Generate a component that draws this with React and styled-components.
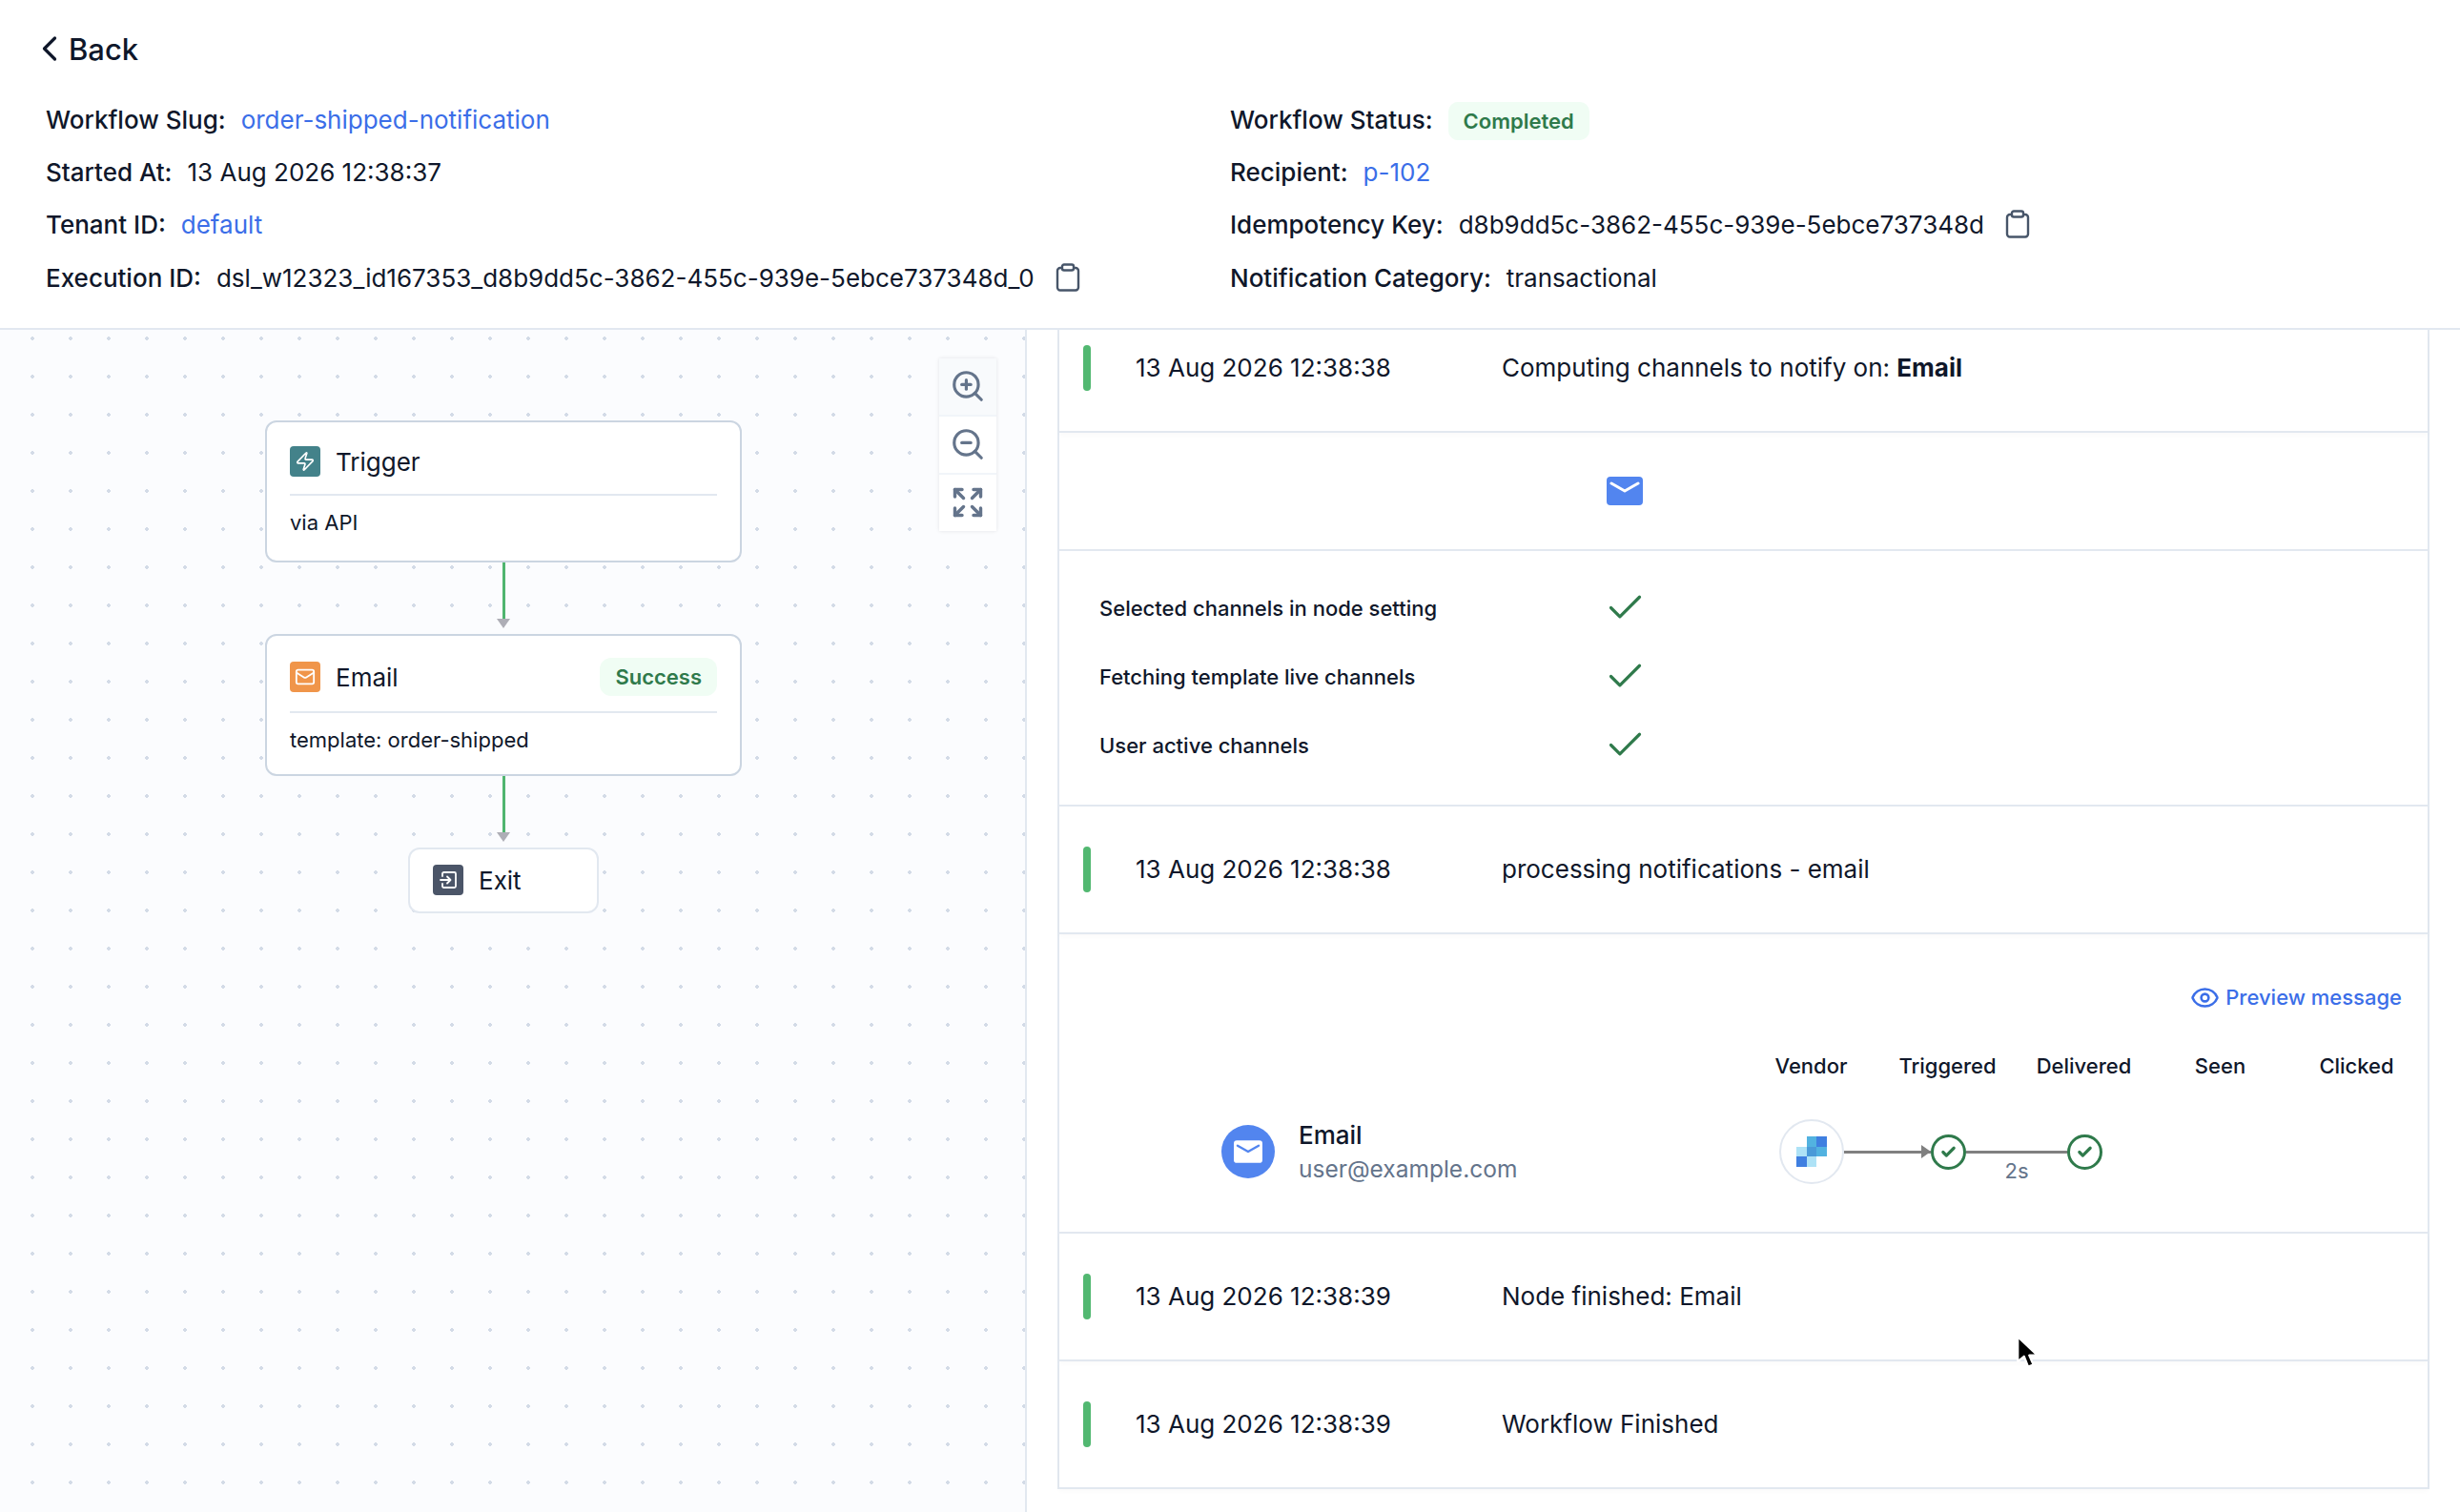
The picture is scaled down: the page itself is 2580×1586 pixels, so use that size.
import React from "react";
import styled, { createGlobalStyle } from "styled-components";
import { ChevronLeft, Zap, Mail, ZoomIn, ZoomOut, Expand, Eye, Check } from "lucide-react";

const GlobalStyle = createGlobalStyle`
	html, body {
		margin: 0;
		padding: 0;
		background: #fff;
		color: #0f172a;
		font-family: Inter, "Liberation Sans", sans-serif;
	}
	* { box-sizing: border-box; }
`;

const Page = styled.div`
	position: relative;
	width: 2580px;
	height: 1586px;
	overflow: hidden;
	background: #fff;
`;

const Header = styled.header`
	height: 346px;
	padding: 26px 48px 0;
	border-bottom: 2px solid #e2e8f0;
`;

const BackLink = styled.a`
	display: flex;
	align-items: center;
	height: 50px;
	margin-left: -18px;
	font-size: 31px;
	font-weight: 500;
	color: #0f172a;
	svg {
		margin-right: -2px;
	}
`;

const MetaGrid = styled.div`
	display: grid;
	grid-template-columns: 1242px 1fr;
	grid-template-rows: 54px 56px 54px 58px;
	margin-top: 22px;
`;

const MetaRow = styled.div`
	display: flex;
	align-items: center;
	gap: 16px;
	font-size: 26px;
`;

const Label = styled.span`
	font-weight: 500;
`;

const Link = styled.a`
	color: #3b6ee8;
`;

const StatusBadge = styled.span`
	display: inline-flex;
	align-items: center;
	height: 40px;
	margin-top: 4px;
	padding: 0 16px;
	border-radius: 10px;
	background: #f0fdf4;
	color: #2f7a4b;
	font-size: 22px;
	font-weight: 600;
`;

const CopyIcon = styled.svg`
	width: 26px;
	height: 30px;
	margin-left: 6px;
	color: #475569;
`;

const Body = styled.main`
	display: flex;
	height: 1240px;
`;

const Canvas = styled.section`
	position: relative;
	flex: 0 0 1077px;
	padding: 95px 0 0 278px;
	border-right: 2px solid #e2e8f0;
	background-color: #fbfcfe;
	background-image: radial-gradient(circle at 2px 2px, #d3dbe7 1.6px, transparent 1.8px);
	background-size: 40px 40px;
	background-position: 32px 7px;
`;

const Flow = styled.div`
	display: flex;
	flex-direction: column;
	align-items: center;
	width: 500px;
`;

const Node = styled.div`
	width: 100%;
	height: 149px;
	padding: 23px 24px 0;
	border: 2px solid #cbd5e1;
	border-radius: 12px;
	background: #fff;
`;

const ExitNode = styled.div`
	display: flex;
	align-items: center;
	gap: 16px;
	width: 200px;
	height: 69px;
	padding: 0 24px 1px;
	border: 2px solid #e2e8f0;
	border-radius: 12px;
	background: #fff;
	font-size: 26px;
`;

const NodeHead = styled.div`
	display: flex;
	align-items: center;
	gap: 16px;
	min-height: 36px;
	padding-bottom: 16px;
	border-bottom: 2px solid #e2e8f0;
	font-size: 26px;
	box-sizing: content-box;
`;

const NodeIcon = styled.span`
	display: flex;
	align-items: center;
	justify-content: center;
	width: 32px;
	height: 32px;
	border-radius: 4px;
	background: ${(p) => p.$bg};
	color: #fff;
`;

const NodeBody = styled.div`
	padding-top: 14px;
	line-height: 28px;
	font-size: 22px;
`;

const SuccessBadge = styled(StatusBadge)`
	margin: 0 0 0 auto;
	border-radius: 12px;
`;

const Connector = styled.div`
	display: flex;
	flex-direction: column;
	align-items: center;
	height: 75px;
	i {
		width: 3px;
		height: 59px;
		background: #4fb56f;
	}
	b {
		width: 0;
		height: 0;
		border-left: 7px solid transparent;
		border-right: 7px solid transparent;
		border-top: 10px solid #aeaeb6;
	}
`;

const ZoomBar = styled.div`
	position: absolute;
	top: 30px;
	right: 30px;
	display: flex;
	flex-direction: column;
	gap: 2px;
	width: 60px;
	background: #f1f5f9;
	box-shadow: 0 0 4px rgba(15, 23, 42, 0.1);
`;

const ZoomButton = styled.button`
	display: flex;
	align-items: center;
	justify-content: center;
	width: 60px;
	height: 59px;
	padding: 0 0 2px;
	border: 0;
	background: ${(p) => (p.$active ? "#f8fafc" : "#fff")};
	color: #64748b;
`;

const LogPane = styled.section`
	flex: 0 0 1439px;
	align-self: flex-start;
	margin-left: 32px;
	border-left: 2px solid #e2e8f0;
	border-right: 2px solid #e2e8f0;
`;

const LogRow = styled.div`
	display: flex;
	align-items: center;
	height: ${(p) => (p.$first ? "108px" : "134px")};
	padding: ${(p) => (p.$first ? "0 0 26px 25px" : "0 0 0 25px")};
	border-bottom: 2px solid #e2e8f0;
	box-shadow: 0 3px 5px rgba(15, 23, 42, 0.02);
	font-size: 26px;
`;

const StatusBar = styled.span`
	flex: none;
	width: 8px;
	height: 48px;
	border-radius: 4px;
	background: #52b871;
`;

const LogTime = styled.span`
	flex: none;
	width: 384px;
	margin: 0 0 2px 47px;
`;

const LogText = styled.span`
	margin-bottom: 2px;
`;

const ChannelIconRow = styled.div`
	display: flex;
	align-items: center;
	height: 124px;
	padding-left: 574px;
	border-bottom: 2px solid #e2e8f0;
`;

const ChannelList = styled.div`
	display: flex;
	flex-direction: column;
	justify-content: center;
	height: 268px;
	padding: 0 0 3px 42px;
	border-bottom: 2px solid #e2e8f0;
`;

const ChannelRow = styled.div`
	display: flex;
	align-items: center;
	height: 72px;
	font-size: 22px;
	font-weight: 500;
`;

const ChannelName = styled.span`
	width: 529px;
`;

const Delivery = styled.div`
	height: 314px;
	padding: 51px 0 0 169px;
	border-bottom: 2px solid #e2e8f0;
`;

const PreviewLink = styled.a`
	display: flex;
	align-items: center;
	justify-content: flex-end;
	gap: 6px;
	height: 30px;
	margin-right: 27px;
	color: #3b6ee8;
	font-size: 22px;
	font-weight: 500;
`;

const DeliveryGrid = styled.div`
	display: grid;
	grid-template-columns: 548px repeat(5, 143px);
	grid-template-rows: 46px 134px;
	margin-top: 34px;
	align-items: center;
`;

const ColHead = styled.span`
	text-align: center;
	font-size: 22px;
	font-weight: 500;
`;

const Recipient = styled.div`
	display: flex;
	align-items: center;
	gap: 25px;
	grid-column: 1;
	padding-left: 1px;
`;

const ChannelDot = styled.span`
	display: flex;
	align-items: center;
	justify-content: center;
	width: 56px;
	height: 56px;
	border-radius: 50%;
	background: #5285ef;
`;

const RecipientText = styled.div`
	display: flex;
	flex-direction: column;
	gap: 5px;
	strong {
		font-size: 26px;
		font-weight: 500;
	}
	span {
		color: #64748b;
		font-size: 24.5px;
	}
`;

const Timeline = styled.div`
	grid-column: 2 / span 3;
	display: flex;
	align-items: center;
	padding-left: 38px;
`;

const VendorDot = styled.span`
	display: flex;
	align-items: center;
	justify-content: center;
	flex: none;
	width: 68px;
	height: 68px;
	border: 2px solid #e2e8f0;
	border-radius: 50%;
`;

const Track = styled.span`
	position: relative;
	display: block;
	flex: none;
	width: ${(p) => p.$w}px;
	height: 3px;
	background: #808080;
`;

const TrackArrow = styled.i`
	position: absolute;
	right: 0;
	top: -6px;
	border-top: 7px solid transparent;
	border-bottom: 7px solid transparent;
	border-left: 10px solid #808080;
`;

const TrackLabel = styled.span`
	position: absolute;
	left: 0;
	right: 0;
	top: 8px;
	text-align: center;
	color: #64748b;
	font-size: 22px;
`;

const CheckDot = styled.span`
	display: flex;
	align-items: center;
	justify-content: center;
	flex: none;
	width: 37px;
	height: 37px;
	border: 3px solid #2f7a4b;
	border-radius: 50%;
	color: #2f7a4b;
`;

const Cursor = styled.svg`
	position: absolute;
	left: 2113px;
	top: 1400px;
	width: 26px;
	height: 39px;
`;

const Clipboard = () => (
	<CopyIcon viewBox="0 0 26 30" fill="none" stroke="currentColor" strokeWidth="2.4">
		<rect x="2" y="5" width="22" height="23.5" rx="3" />
		<rect x="7" y="1.5" width="12" height="6" rx="2" fill="#fff" />
	</CopyIcon>
);

const ExitGlyph = () => (
	<svg width="20" height="20" viewBox="0 0 20 20" fill="none" stroke="#fff" strokeWidth="1.8" strokeLinecap="round" strokeLinejoin="round">
		<path d="M4 6V3.500A1.500 1.500 0 0 1 5.500 2h11A1.500 1.500 0 0 1 18 3.500v13a1.500 1.500 0 0 1-1.500 1.500h-11A1.500 1.500 0 0 1 4 16.500V14" />
		<path d="M2 10h10M9 6.500l3.500 3.500L9 13.500" />
	</svg>
);

const EnvelopeFilled = ({ w, h, bg, stroke }) => (
	<svg width={w} height={h} viewBox="0 0 38 30">
		<rect width="38" height="30" rx="4" fill={bg} />
		<path d="M5 7l14 8 14-8" fill="none" stroke={stroke} strokeWidth="3" strokeLinecap="round" strokeLinejoin="round" />
	</svg>
);

const SendgridLogo = () => (
	<svg width="32" height="32" viewBox="0 0 3 3" shapeRendering="crispEdges">
		<rect x="1" y="0" width="1" height="1" fill="#52b2e0" />
		<rect x="2" y="0" width="1" height="1" fill="#3f7fe0" />
		<rect x="0" y="1" width="1" height="1" fill="#aee2f6" />
		<rect x="1" y="1" width="1" height="1" fill="#4a9ad8" />
		<rect x="2" y="1" width="1" height="1" fill="#52b2e0" />
		<rect x="0" y="2" width="1" height="1" fill="#3f7fe0" />
		<rect x="1" y="2" width="1" height="1" fill="#aee2f6" />
	</svg>
);

const Arrow = () => (
	<Connector>
		<i />
		<b />
	</Connector>
);

const channels = [
	"Selected channels in node setting",
	"Fetching template live channels",
	"User active channels",
];

const Entry = ({ time, first, children }) => (
	<LogRow $first={first}>
		<StatusBar />
		<LogTime>{time}</LogTime>
		<LogText>{children}</LogText>
	</LogRow>
);

export default function App() {
	return (
		<Page>
			<GlobalStyle />
			<Header>
				<BackLink>
					<ChevronLeft size={44} strokeWidth={1.8} />
					Back
				</BackLink>
				<MetaGrid>
					<MetaRow>
						<Label>Workflow Slug:</Label>
						<Link>order-shipped-notification</Link>
					</MetaRow>
					<MetaRow>
						<Label>Workflow Status:</Label>
						<StatusBadge>Completed</StatusBadge>
					</MetaRow>
					<MetaRow>
						<Label>Started At:</Label>
						<span>13 Aug 2026 12:38:37</span>
					</MetaRow>
					<MetaRow>
						<Label>Recipient:</Label>
						<Link>p-102</Link>
					</MetaRow>
					<MetaRow>
						<Label>Tenant ID:</Label>
						<Link>default</Link>
					</MetaRow>
					<MetaRow>
						<Label>Idempotency Key:</Label>
						<span>d8b9dd5c-3862-455c-939e-5ebce737348d</span>
						<Clipboard />
					</MetaRow>
					<MetaRow>
						<Label>Execution ID:</Label>
						<span>dsl_w12323_id167353_d8b9dd5c-3862-455c-939e-5ebce737348d_0</span>
						<Clipboard />
					</MetaRow>
					<MetaRow>
						<Label>Notification Category:</Label>
						<span>transactional</span>
					</MetaRow>
				</MetaGrid>
			</Header>
			<Body>
				<Canvas>
					<Flow>
						<Node>
							<NodeHead>
								<NodeIcon $bg="#43828a">
									<Zap size={22} strokeWidth={1.8} />
								</NodeIcon>
								Trigger
							</NodeHead>
							<NodeBody>via API</NodeBody>
						</Node>
						<Arrow />
						<Node>
							<NodeHead>
								<NodeIcon $bg="#f0954a">
									<Mail size={22} strokeWidth={2} />
								</NodeIcon>
								Email
								<SuccessBadge>Success</SuccessBadge>
							</NodeHead>
							<NodeBody>template: order-shipped</NodeBody>
						</Node>
						<Arrow />
						<ExitNode>
							<NodeIcon $bg="#4b5568">
								<ExitGlyph />
							</NodeIcon>
							Exit
						</ExitNode>
					</Flow>
					<ZoomBar>
						<ZoomButton $active>
							<ZoomIn size={38} strokeWidth={2} />
						</ZoomButton>
						<ZoomButton>
							<ZoomOut size={38} strokeWidth={2} />
						</ZoomButton>
						<ZoomButton>
							<Expand size={36} strokeWidth={2.3} />
						</ZoomButton>
					</ZoomBar>
				</Canvas>
				<LogPane>
					<Entry time="13 Aug 2026 12:38:38" first>
						Computing channels to notify on: <strong>Email</strong>
					</Entry>
					<ChannelIconRow>
						<EnvelopeFilled w={38} h={30} bg="#5285ef" stroke="#fff" />
					</ChannelIconRow>
					<ChannelList>
						{channels.map((name) => (
							<ChannelRow key={name}>
								<ChannelName>{name}</ChannelName>
								<Check size={45} strokeWidth={1.7} color="#2f7a4b" />
							</ChannelRow>
						))}
					</ChannelList>
					<Entry time="13 Aug 2026 12:38:38">processing notifications - email</Entry>
					<Delivery>
						<PreviewLink>
							<Eye size={31} strokeWidth={2} />
							Preview message
						</PreviewLink>
						<DeliveryGrid>
							<span />
							<ColHead>Vendor</ColHead>
							<ColHead>Triggered</ColHead>
							<ColHead>Delivered</ColHead>
							<ColHead>Seen</ColHead>
							<ColHead>Clicked</ColHead>
							<Recipient>
								<ChannelDot>
									<EnvelopeFilled w={30} h={24} bg="#fff" stroke="#5285ef" />
								</ChannelDot>
								<RecipientText>
									<strong>Email</strong>
									<span>user@example.com</span>
								</RecipientText>
							</Recipient>
							<Timeline>
								<VendorDot>
									<SendgridLogo />
								</VendorDot>
								<Track $w={91}>
									<TrackArrow />
								</Track>
								<CheckDot>
									<Check size={17} strokeWidth={4.5} />
								</CheckDot>
								<Track $w={106}>
									<TrackLabel>2s</TrackLabel>
								</Track>
								<CheckDot>
									<Check size={17} strokeWidth={4.5} />
								</CheckDot>
							</Timeline>
						</DeliveryGrid>
					</Delivery>
					<Entry time="13 Aug 2026 12:38:39">Node finished: Email</Entry>
					<Entry time="13 Aug 2026 12:38:39">Workflow Finished</Entry>
				</LogPane>
			</Body>
			<Cursor viewBox="0 0 24 36">
				<path d="M3 2v24l6-5 4 10 5-2-4-9h8z" fill="#000" stroke="#fff" strokeWidth="2" strokeLinejoin="round" />
			</Cursor>
		</Page>
	);
}
